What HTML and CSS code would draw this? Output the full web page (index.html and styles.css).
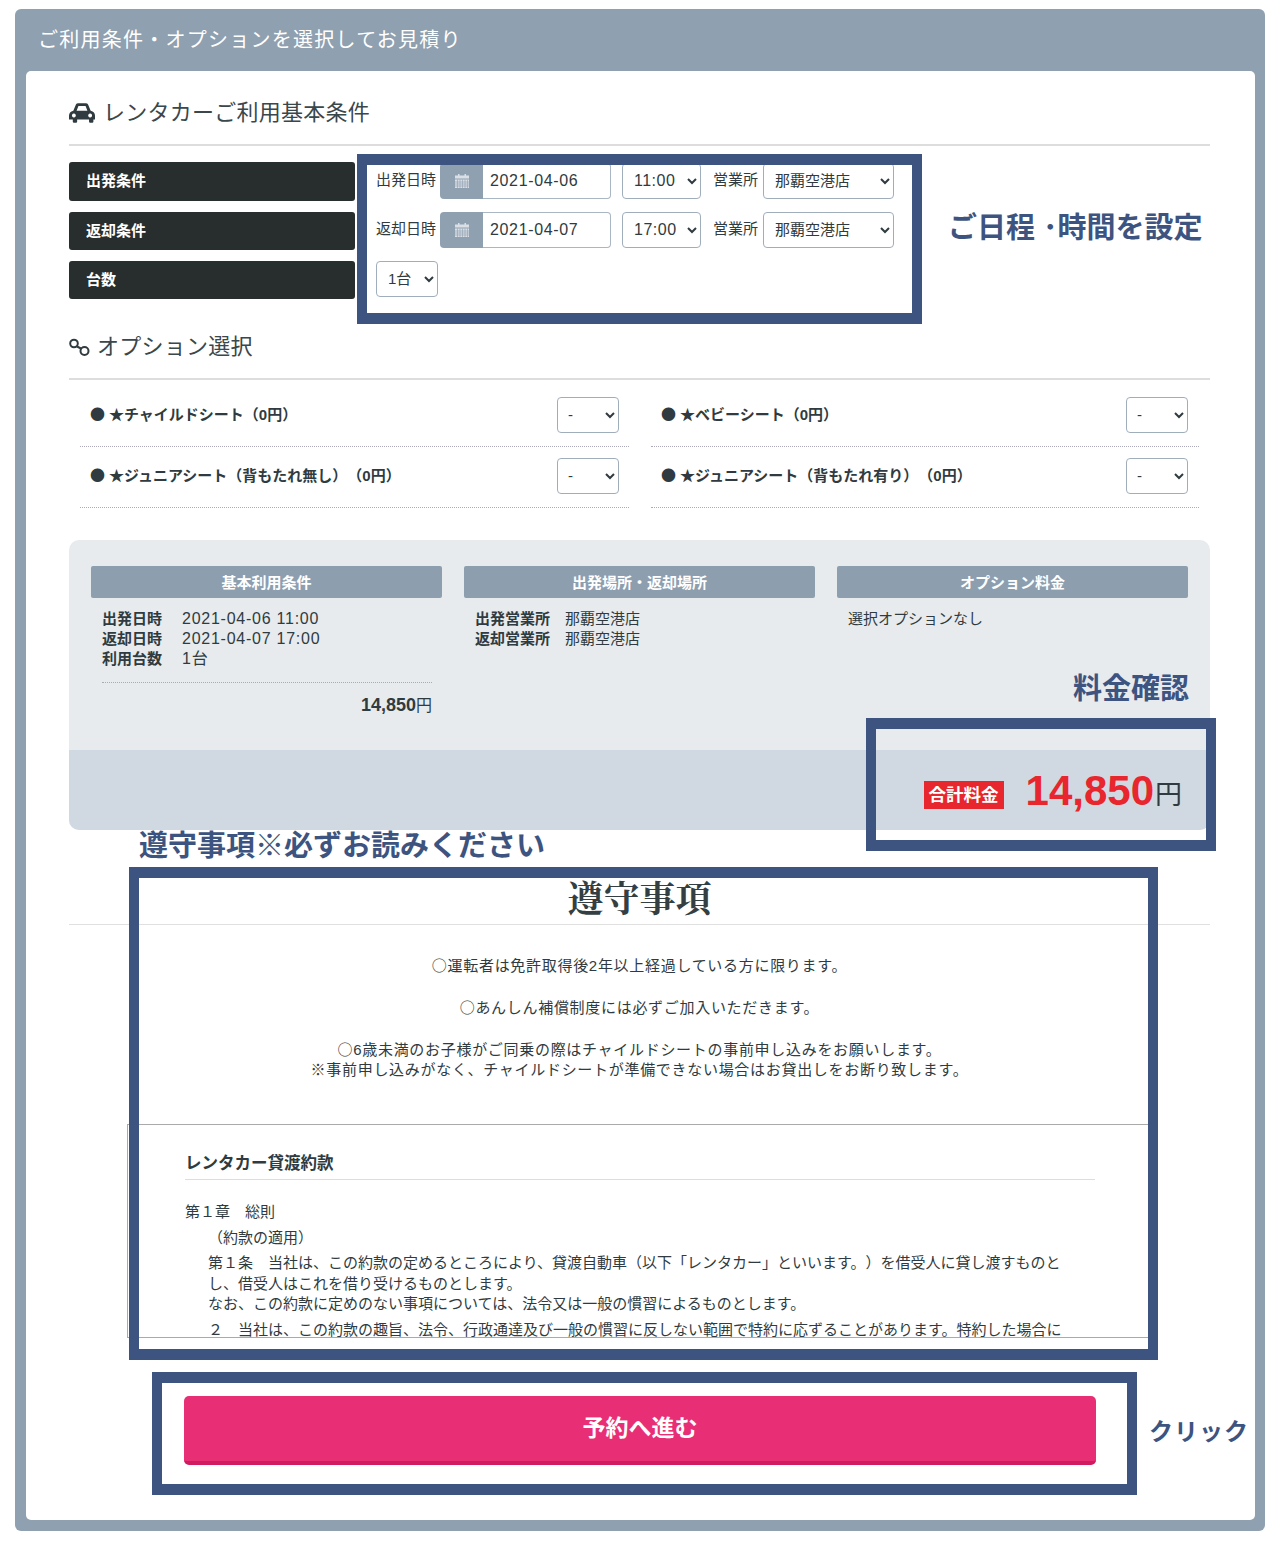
FILE: index.html
```html
<!DOCTYPE html>
<html lang="ja">
<head>
<meta charset="utf-8">
<title>ご利用条件・オプションを選択してお見積り</title>
<link rel="stylesheet" href="styles.css">
</head>
<body>
<main class="panel">
  <h1 class="panel-title">ご利用条件・オプションを選択してお見積り</h1>
  <div class="inner">
    <h2 class="section-title">
      <svg class="icon-car" viewBox="1 1 24 18"><path fill-rule="evenodd" fill="#2f3b40" d="M5 8 7.400 2.200Q8 1 9.500 1h7q1.500 0 2.100 1.200L21 8q4 1 4 4.500V16h-1.500v2q0 1-1 1h-2q-1 0-1-1v-2H8.500v2q0 1-1 1h-2q-1 0-1-1v-2H1v-3.500Q1 9 5 8ZM8 8h10l-1.700-4.500H9.700ZM5.500 10.500a1.800 1.800 0 1 0 .01 0ZM20.500 10.500a1.800 1.800 0 1 0 .01 0Z"/></svg>
      レンタカーご利用基本条件
    </h2>
    <div class="cond-row first">
      <div class="cond-label">出発条件</div>
      <div class="cond-controls">
        <span class="ctl-label">出発日時</span>
        <span class="date-group">
          <span class="date-addon"><svg class="icon-cal" viewBox="0 0 14 14"><path fill="#d9dfe5" d="M3 0h1.500v1.500H3ZM9.500 0H11v1.500H9.500ZM0 1.500h14v3H0ZM0 5.500h14V14H0Z"/><path stroke="#8fa0b0" stroke-width=".6" d="M0 8h14M0 10h14M0 12h14M2.500 5.500V14M5 5.500V14M7.500 5.500V14M10 5.500V14M12.500 5.500V14"/></svg></span>
          <input class="date-input" type="text" value="2021-04-06">
        </span>
        <select class="sel sel-time"><option>11:00</option></select>
        <span class="ctl-label shop">営業所</span>
        <select class="sel sel-shop"><option>那覇空港店</option></select>
      </div>
    </div>
    <div class="cond-row second">
      <div class="cond-label">返却条件</div>
      <div class="cond-controls">
        <span class="ctl-label">返却日時</span>
        <span class="date-group">
          <span class="date-addon"><svg class="icon-cal" viewBox="0 0 14 14"><path fill="#d9dfe5" d="M3 0h1.500v1.500H3ZM9.500 0H11v1.500H9.500ZM0 1.500h14v3H0ZM0 5.500h14V14H0Z"/><path stroke="#8fa0b0" stroke-width=".6" d="M0 8h14M0 10h14M0 12h14M2.500 5.500V14M5 5.500V14M7.500 5.500V14M10 5.500V14M12.500 5.500V14"/></svg></span>
          <input class="date-input" type="text" value="2021-04-07">
        </span>
        <select class="sel sel-time"><option>17:00</option></select>
        <span class="ctl-label shop">営業所</span>
        <select class="sel sel-shop"><option>那覇空港店</option></select>
      </div>
    </div>
    <div class="cond-row third">
      <div class="cond-label">台数</div>
      <div class="cond-controls">
        <select class="sel sel-count"><option>1台</option></select>
      </div>
    </div>

    <h2 class="section-title options-title">
      <svg class="icon-link" viewBox="0 0 21 19"><g fill="none" stroke="#2f3b40" stroke-width="2"><circle cx="5" cy="5.500" r="3.800"/><circle cx="15.500" cy="13" r="4"/><path d="M8 8.500l4 2"/></g></svg>
      オプション選択
    </h2>
    <div class="option-grid">
      <div class="option"><span class="option-name"><span class="mark">●</span>★チャイルドシート（0円）</span><select class="sel sel-opt"><option>-</option></select></div>
      <div class="option"><span class="option-name"><span class="mark">●</span>★ベビーシート（0円）</span><select class="sel sel-opt"><option>-</option></select></div>
      <div class="option"><span class="option-name"><span class="mark">●</span>★ジュニアシート（背もたれ無し）（0円）</span><select class="sel sel-opt"><option>-</option></select></div>
      <div class="option"><span class="option-name"><span class="mark">●</span>★ジュニアシート（背もたれ有り）（0円）</span><select class="sel sel-opt"><option>-</option></select></div>
    </div>

    <section class="summary">
      <div class="summary-cols">
        <div class="summary-col">
          <h3 class="summary-head">基本利用条件</h3>
          <dl class="summary-list">
            <dt>出発日時</dt><dd class="num">2021-04-06 11:00</dd>
            <dt>返却日時</dt><dd class="num">2021-04-07 17:00</dd>
            <dt>利用台数</dt><dd class="num">1台</dd>
          </dl>
          <div class="summary-sub"><b>14,850</b>円</div>
        </div>
        <div class="summary-col">
          <h3 class="summary-head">出発場所・返却場所</h3>
          <dl class="summary-list wide">
            <dt>出発営業所</dt><dd>那覇空港店</dd>
            <dt>返却営業所</dt><dd>那覇空港店</dd>
          </dl>
        </div>
        <div class="summary-col">
          <h3 class="summary-head">オプション料金</h3>
          <p class="summary-text">選択オプションなし</p>
        </div>
      </div>
      <div class="total-band">
        <span class="total-badge">合計料金</span>
        <span class="total-price">14,850</span>
        <span class="total-yen">円</span>
      </div>
    </section>

    <h2 class="terms-title">遵守事項</h2>
    <div class="terms-notes">
      <p><span class="mark">○</span>運転者は免許取得後2年以上経過している方に限ります。</p>
      <p><span class="mark">○</span>あんしん補償制度には必ずご加入いただきます。</p>
      <p><span class="mark">○</span>6歳未満のお子様がご同乗の際はチャイルドシートの事前申し込みをお願いします。<br>※事前申し込みがなく、チャイルドシートが準備できない場合はお貸出しをお断り致します。</p>
    </div>
    <div class="terms-scroll">
      <h3 class="terms-head">レンタカー貸渡約款</h3>
      <p class="chapter">第１章　総則</p>
      <p class="article-title">（約款の適用）</p>
      <p class="article">第１条　当社は、この約款の定めるところにより、貸渡自動車（以下「レンタカー」といいます。）を借受人に貸し渡すものとし、借受人はこれを借り受けるものとします。<br>なお、この約款に定めのない事項については、法令又は一般の慣習によるものとします。</p>
      <p class="article">２　当社は、この約款の趣旨、法令、行政通達及び一般の慣習に反しない範囲で特約に応ずることがあります。特約した場合には、その特約が優先するものとします。</p>
    </div>
    <button class="submit" type="button">予約へ進む</button>
  </div>
</main>

<div class="frame frame-date"></div>
<div class="frame frame-total"></div>
<div class="frame frame-terms"></div>
<div class="frame frame-submit"></div>
<div class="note note-date">ご日程 ･時間を設定</div>
<div class="note note-price">料金確認</div>
<div class="note note-terms">遵守事項※必ずお読みください</div>
<div class="note note-click">クリック</div>
</body>
</html>
```
FILE: styles.css
```css
* { box-sizing: border-box; }
html, body { margin: 0; padding: 0; }
body {
  position: relative;
  height: 1542px;
  background: #fff;
  color: #2f3b40;
  font-family: "Liberation Sans", "Noto Sans CJK JP", sans-serif;
  font-size: 15px;
  line-height: 20px;
  text-spacing-trim: space-all;
}
h1, h2, h3, p, dl, dd { margin: 0; padding: 0; }
.mark { font-family: "Noto Sans CJK JP", sans-serif; line-height: 1; }

.panel {
  margin: 9px 15px 0;
  padding: 0 10px 11px 11px;
  background: #8fa0b0;
  border-radius: 6px;
}
.panel-title {
  height: 62px;
  padding-left: 12px;
  color: #fff;
  font-size: 20px;
  font-weight: 400;
  line-height: 63px;
  letter-spacing: 1.250px;
}
.inner {
  padding: 24px 45px 55px 43px;
  background: #fff;
  border-radius: 5px;
}
.section-title {
  display: flex;
  align-items: center;
  height: 51px;
  padding-bottom: 13px;
  margin-bottom: 16px;
  border-bottom: 2px solid #ddd;
  color: #3a474b;
  font-size: 22px;
  font-weight: 400;
  line-height: 36px;
  letter-spacing: .25px;
}
.icon-car { width: 26px; height: 20px; margin-right: 8px; }
.icon-link { width: 21px; height: 19px; margin-right: 7px; }
.options-title { margin-top: 30px; margin-bottom: 0; }

.cond-row { display: flex; margin-bottom: 11px; }
.cond-row.first { height: 39px; }
.cond-row.second, .cond-row.third { height: 38px; }
.cond-row.third { margin-bottom: 0; }
.cond-label {
  flex: 0 0 286px;
  padding-left: 17px;
  background: #282d2d;
  border-radius: 3px;
  color: #fff;
  font-size: 15px;
  font-weight: 700;
  line-height: 38px;
}
.cond-controls {
  display: flex;
  align-items: flex-start;
  padding-left: 21px;
}
.first .cond-controls { padding-top: 1px; }
.ctl-label { width: 60px; margin-right: 4px; font-size: 15px; line-height: 33px; white-space: nowrap; }
.ctl-label.shop { width: 45px; margin: 0 5px 0 12px; }

.date-group {
  display: flex;
  width: 171px;
  height: 36px;
  margin-right: 11px;
}
.date-addon {
  display: flex;
  flex: 0 0 43px;
  align-items: center;
  justify-content: center;
  background: #8fa0b0;
  border-radius: 4px 0 0 4px;
}
.icon-cal { width: 14px; height: 14px; }
.date-input {
  width: 128px;
  padding: 0 0 0 7px;
  border: 1px solid #a9b6c3;
  border-left: 0;
  border-radius: 0 4px 4px 0;
  color: #2f3b40;
  font: 16px/34px "Liberation Sans", "Noto Sans CJK JP", sans-serif;
  letter-spacing: .65px;
}
.sel {
  height: 36px;
  padding: 0 0 2px 7px;
  background: #fff;
  border: 1px solid #a0aebc;
  border-radius: 4px;
  color: #2f3b40;
  font: 15px "Liberation Sans", "Noto Sans CJK JP", sans-serif;
}
.sel-time { width: 79px; font-size: 16px; letter-spacing: .5px; }
.sel-shop { width: 131px; }
.sel-count { width: 62px; }
.sel-opt { width: 62px; padding-left: 6px; }

.option-grid {
  display: grid;
  grid-template-columns: 549px 548px;
  column-gap: 22px;
  margin: 6px 0 0 11px;
}
.option {
  display: flex;
  align-items: center;
  justify-content: space-between;
  height: 61px;
  padding: 11px 10px 13px;
  border-bottom: 1px dotted #aab;
}
.option:first-child, .option:nth-child(2) { height: 61px; }
.option:nth-child(even) { padding-right: 11px; }
.option-name { font-size: 15px; font-weight: 700; }
.option-name .mark { margin-right: 4px; }

.summary {
  margin-top: 32px;
  height: 290px;
  background: #e7ebee;
  border-radius: 10px;
  overflow: hidden;
}
.summary-cols {
  display: grid;
  grid-template-columns: repeat(3, 351px);
  column-gap: 22px;
  height: 210px;
  padding: 26px 22px 0;
}
.summary-head {
  height: 32px;
  margin-bottom: 11px;
  background: #8d9eaf;
  border-radius: 2px;
  color: #fff;
  font-size: 15px;
  font-weight: 700;
  line-height: 33px;
  text-align: center;
}
.summary-list {
  display: grid;
  grid-template-columns: 80px 1fr;
  margin: 0 10px 0 11px;
  padding-bottom: 13px;
  border-bottom: 1px dotted #aab;
  font-size: 15px;
}
.summary-list dt { font-weight: 700; }
.summary-list dd.num { font-size: 16px; letter-spacing: .75px; }
.summary-list.wide { grid-template-columns: 90px 1fr; border-bottom: 0; }
.summary-sub { margin: 12px 10px 0 0; text-align: right; font-size: 16px; }
.summary-sub b { font-size: 18px; }
.summary-text { padding-left: 11px; }

.total-band {
  display: flex;
  align-items: flex-start;
  justify-content: flex-end;
  height: 80px;
  padding-right: 28px;
  background: #d0d9e2;
}
.total-badge {
  width: 80px;
  margin: 31px 22px 0 0;
  background: #e8262d;
  color: #fff;
  font-size: 17.500px;
  font-weight: 700;
  line-height: 28px;
  text-align: center;
}
.total-price { margin-top: 16px; color: #e8262d; font-size: 42px; font-weight: 700; line-height: 50px; }
.total-yen { margin: 30px 0 0 1px; font-size: 27px; line-height: 30px; }

.terms-title {
  margin: 46px 0 0;
  height: 49px;
  border-bottom: 1px solid #e0e0e0;
  color: #343f43;
  font-family: "Liberation Serif", "Noto Serif CJK JP", "Noto Sans CJK JP", serif;
  font-size: 36px;
  font-weight: 700;
  line-height: 48px;
  text-align: center;
}
.terms-notes { padding-top: 31px; text-align: center; letter-spacing: .7px; }
.terms-notes p { margin-bottom: 22px; }
.terms-notes p:last-child { margin-bottom: 0; }
.terms-scroll {
  width: 1023px;
  height: 214px;
  margin: 44px 0 0 58px;
  padding: 27px 0 0 57px;
  border: 1px solid #aaa;
  overflow: hidden;
  line-height: 20.500px;
}
.terms-head {
  width: 910px;
  height: 28px;
  margin-bottom: 22px;
  padding-top: 1px;
  border-bottom: 1px solid #ddd;
  font-size: 16.500px;
  font-weight: 700;
  line-height: 20px;
}
.chapter { margin-bottom: 5px; }
.article-title { margin: 0 0 5px 23px; }
.article { width: 865px; margin: 0 0 5px 23px; }

.submit {
  display: block;
  width: 912px;
  height: 69px;
  margin: 58px 0 0 115px;
  padding: 0 0 5px;
  background: #e82e75;
  border: 0;
  border-bottom: 4px solid #d01b60;
  border-radius: 5px;
  color: #fff;
  font: 700 23px "Liberation Sans", "Noto Sans CJK JP", sans-serif;
}

.frame {
  position: absolute;
  border: solid #3d5480;
  border-width: 11px 10px;
}
.frame-date { left: 357px; top: 154px; width: 565px; height: 170px; }
.frame-total { left: 866px; top: 718px; width: 350px; height: 133px; }
.frame-terms { left: 129px; top: 867px; width: 1029px; height: 493px; }
.frame-submit { left: 152px; top: 1372px; width: 985px; height: 123px; }

.note {
  position: absolute;
  color: #3d5480;
  font-weight: 700;
  white-space: nowrap;
}
.note-date { left: 948px; top: 208px; font-size: 29px; line-height: 40px; }
.note-price { left: 1073px; top: 669px; font-size: 29px; line-height: 40px; }
.note-terms { left: 139px; top: 826px; font-size: 29px; line-height: 40px; }
.note-click { left: 1149px; top: 1412px; font-size: 24px; line-height: 40px; letter-spacing: 1px; }
```
